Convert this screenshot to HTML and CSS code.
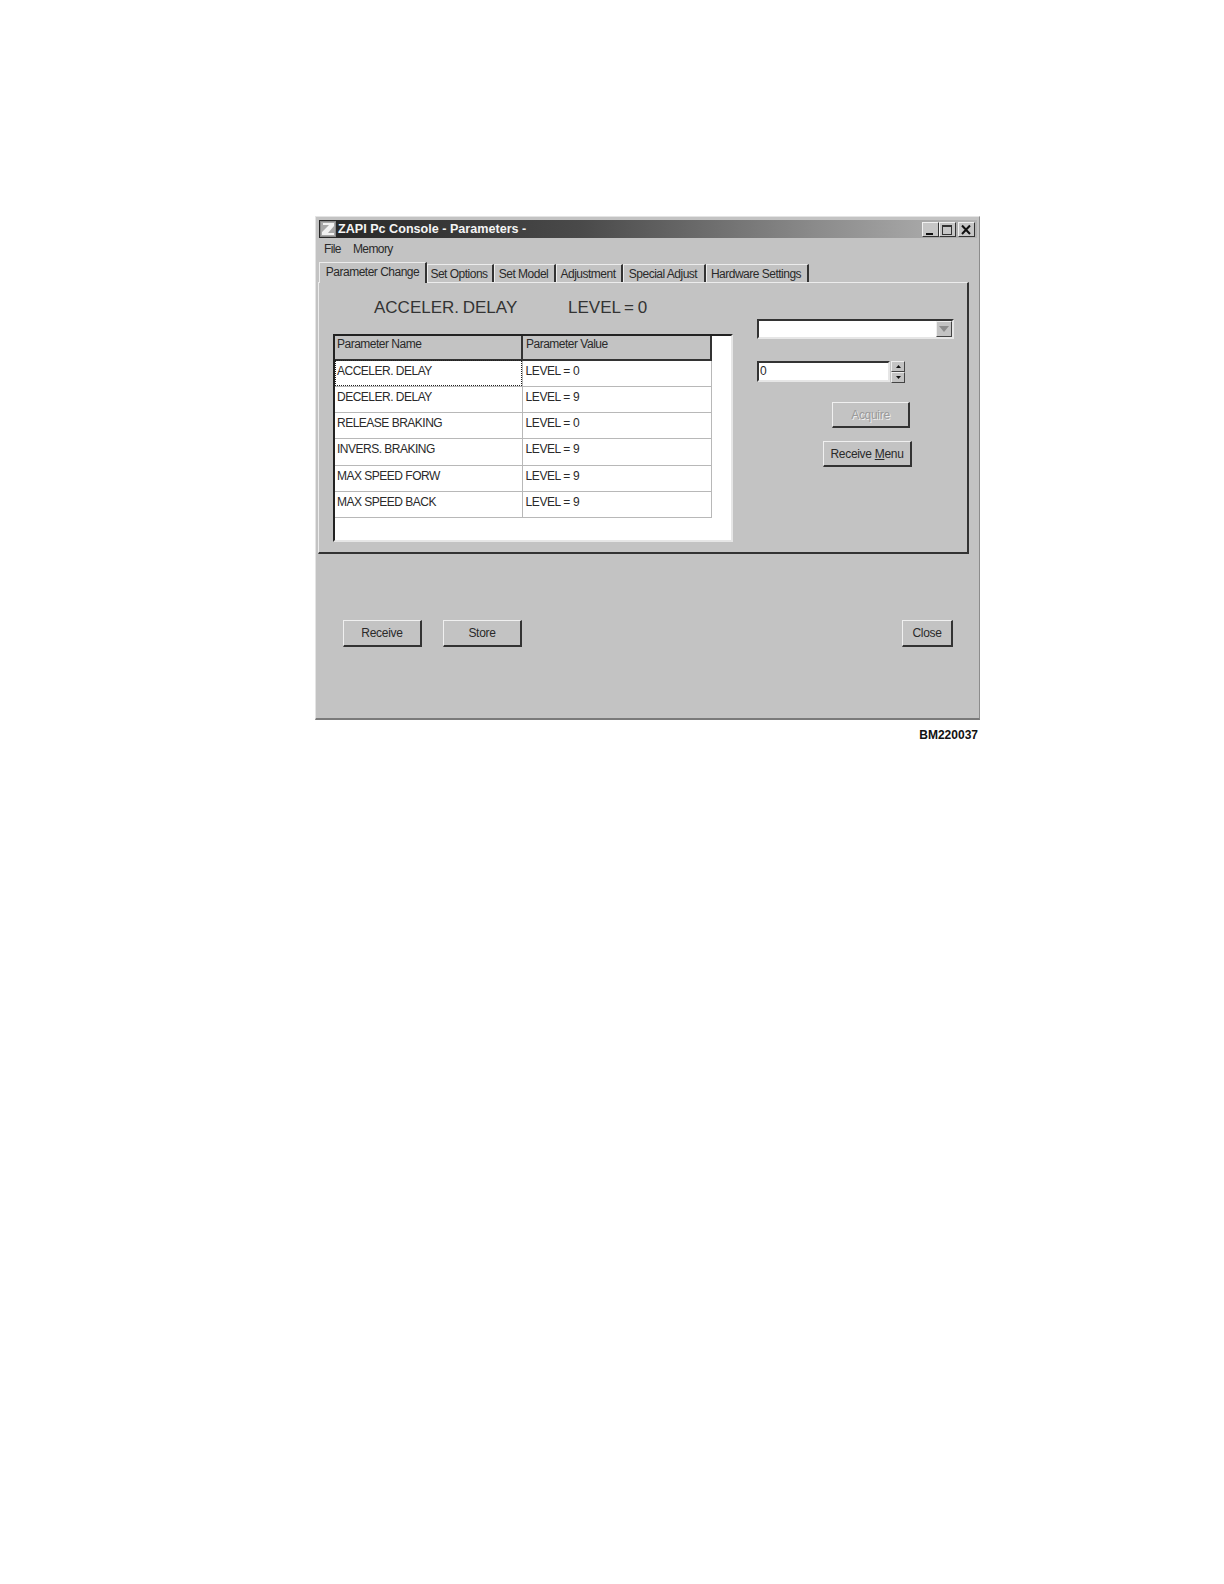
FILE: index.html
```html
<!DOCTYPE html>
<html lang="en">
<head>
    <meta charset="UTF-8">
    <title>ZAPI Pc Console - Parameters -</title>
    <link rel="stylesheet" href="styles.css">
</head>
<body>
    <div class="figure">
        <div class="window">
            <div class="titlebar">
                <svg class="app-icon" width="16" height="16" viewBox="0 0 16 16">
                    <rect width="16" height="16" fill="#8a8a8a"/>
                    <rect x="1" y="1" width="14" height="14" fill="#a8a8a8"/>
                    <polygon points="3,2 14,2 14,5 8,12 14,12 14,14 2,14 2,11 9,4 3,4" fill="#f2f2f2"/>
                </svg>
                <span class="title">ZAPI Pc Console - Parameters -</span>
                <div class="win-buttons">
                    <button class="win-btn">
                        <svg width="15" height="14" viewBox="0 0 15 14"><rect x="3" y="10" width="7" height="2" fill="#111"/></svg>
                    </button>
                    <button class="win-btn">
                        <svg width="15" height="14" viewBox="0 0 15 14"><rect x="2.5" y="2.5" width="9" height="9" fill="none" stroke="#333"/><rect x="2" y="2" width="10" height="2" fill="#333"/></svg>
                    </button>
                    <button class="win-btn close-btn">
                        <svg width="15" height="14" viewBox="0 0 15 14"><path d="M3 2.5 L11 11 M11 2.5 L3 11" stroke="#111" stroke-width="2" fill="none"/></svg>
                    </button>
                </div>
            </div>

            <div class="menubar">
                <span>File</span>
                <span>Memory</span>
            </div>

            <div class="tabs">
                <div class="tab active">Parameter Change</div>
                <div class="tab w-options">Set Options</div>
                <div class="tab w-model">Set Model</div>
                <div class="tab w-adjust">Adjustment</div>
                <div class="tab w-special">Special Adjust</div>
                <div class="tab w-hardware">Hardware Settings</div>
            </div>

            <div class="panel">
                <div class="left-col">
                    <div class="readout">
                        <span class="readout-name">ACCELER. DELAY</span>
                        <span>LEVEL = 0</span>
                    </div>
                    <div class="grid">
                        <table>
                            <thead>
                                <tr><th>Parameter Name</th><th>Parameter Value</th></tr>
                            </thead>
                            <tbody>
                                <tr><td class="focused">ACCELER. DELAY</td><td>LEVEL = 0</td></tr>
                                <tr><td>DECELER. DELAY</td><td>LEVEL = 9</td></tr>
                                <tr><td>RELEASE BRAKING</td><td>LEVEL = 0</td></tr>
                                <tr><td>INVERS. BRAKING</td><td>LEVEL = 9</td></tr>
                                <tr><td>MAX SPEED FORW</td><td>LEVEL = 9</td></tr>
                                <tr><td>MAX SPEED BACK</td><td>LEVEL = 9</td></tr>
                            </tbody>
                        </table>
                    </div>
                </div>

                <div class="right-col">
                    <div class="combo">
                        <div class="combo-arrow">
                            <svg width="10" height="8" viewBox="0 0 10 8"><polygon points="0,1 10,1 5,7" fill="#8c8c8c"/></svg>
                        </div>
                    </div>
                    <div class="spin-row">
                        <div class="spin-edit">0</div>
                        <div class="spin-buttons">
                            <div class="spin-btn"><svg width="5" height="3" viewBox="0 0 5 3"><polygon points="2.5,0 5,3 0,3" fill="#111"/></svg></div>
                            <div class="spin-btn"><svg width="5" height="3" viewBox="0 0 5 3"><polygon points="0,0 5,0 2.5,3" fill="#111"/></svg></div>
                        </div>
                    </div>
                    <button class="btn acquire" disabled>Acquire</button>
                    <button class="btn receive-menu">Receive <u>M</u>enu</button>
                </div>
            </div>

            <div class="footer">
                <button class="btn w-78">Receive</button>
                <button class="btn w-78 store">Store</button>
                <button class="btn close">Close</button>
            </div>
        </div>
        <div class="caption">BM220037</div>
    </div>
</body>
</html>
```

FILE: styles.css
```css
body {
    margin: 0;
    padding: 216px 0 0 315px;
    background-color: #fff;
    font-family: "Liberation Sans", Arial, sans-serif;
    font-size: 12px;
    letter-spacing: -0.5px;
    color: #2a2a2a;
}
.figure {
    width: 665px;
}
.window {
    box-sizing: border-box;
    width: 665px;
    height: 504px;
    padding: 3px 2px 0 3px;
    background-color: #c3c3c3;
    border-top: 1px solid #e4e4e4;
    border-left: 1px solid #e4e4e4;
    border-right: 1px solid #8c8c8c;
    border-bottom: 2px solid #7a7a7a;
}
.titlebar {
    display: flex;
    align-items: center;
    height: 18px;
    background: linear-gradient(to right, #262626 0%, #4a4a4a 40%, #8a8a8a 75%, #b4b4b4 100%);
    color: #f4f4f4;
}
.app-icon {
    margin-left: 1px;
    flex: none;
}
.title {
    margin-left: 2px;
    font-size: 12.6px;
    font-weight: bold;
    letter-spacing: 0;
}
.win-buttons {
    display: flex;
    margin-left: auto;
    margin-right: 2px;
}
.win-btn {
    box-sizing: border-box;
    width: 17px;
    height: 15px;
    padding: 0;
    display: flex;
    background-color: #c6c6c6;
    border: 1px solid;
    border-color: #f0f0f0 #333 #333 #f0f0f0;
}
.win-btn svg {
    display: block;
}
.close-btn {
    margin-left: 2px;
}
.menubar {
    display: flex;
    gap: 12px;
    height: 23px;
    padding-left: 5px;
    line-height: 22px;
    letter-spacing: -0.6px;
}
.tabs {
    display: flex;
    align-items: flex-end;
    height: 21px;
}
.tab {
    box-sizing: border-box;
    height: 18px;
    padding-right: 2px;
    text-align: center;
    line-height: 18px;
    white-space: nowrap;
    border-top: 1px solid #ececec;
    border-left: 1px solid #ececec;
    border-right: 2px solid #333;
}
.tab.active {
    position: relative;
    height: 21px;
    width: 108px;
    margin-bottom: -1px;
    padding-right: 0;
    line-height: 19px;
    background-color: #c3c3c3;
}
.w-options { width: 67px; }
.w-model { width: 62px; }
.w-adjust { width: 67px; }
.w-special { width: 83px; }
.w-hardware { width: 103px; }
.panel {
    box-sizing: border-box;
    display: flex;
    width: 651px;
    height: 272px;
    margin-left: -1px;
    padding-left: 14px;
    border-top: 1px solid #ececec;
    border-left: 1px solid #ececec;
    border-right: 2px solid #333;
    border-bottom: 2px solid #333;
}
.left-col {
    width: 400px;
    flex: none;
}
.readout {
    display: flex;
    height: 51px;
    padding-left: 41px;
    font-size: 17px;
    line-height: 49px;
    letter-spacing: 0;
    word-spacing: -1px;
    color: #333;
}
.readout-name {
    width: 194px;
}
.grid {
    box-sizing: border-box;
    height: 208px;
    background-color: #fff;
    border-top: 2px solid #222;
    border-left: 2px solid #222;
    border-right: 2px solid #e6e6e6;
    border-bottom: 2px solid #e6e6e6;
}
table {
    table-layout: fixed;
    width: 377px;
    border-collapse: collapse;
}
th, td {
    box-sizing: border-box;
    height: 26.25px;
    padding: 0 2px 5px 2px;
    font-size: 12px;
    font-weight: normal;
    text-align: left;
    white-space: nowrap;
    letter-spacing: -0.5px;
}
td:last-child {
    padding-left: 3px;
    letter-spacing: -0.4px;
}
th {
    height: 24px;
    padding-bottom: 7px;
    background-color: #c3c3c3;
    border-right: 2px solid #333;
    border-bottom: 2px solid #333;
}
th:last-child {
    padding-left: 3px;
}
th:first-child {
    width: 187px;
}
td {
    border-right: 1px solid #b8b8b8;
    border-bottom: 1px solid #b8b8b8;
}
td.focused {
    outline: 1px dotted #222;
    outline-offset: -1px;
}
.right-col {
    display: flex;
    flex-direction: column;
    align-items: flex-start;
    width: 197px;
    margin-left: 24px;
    padding-top: 36px;
}
.combo {
    box-sizing: border-box;
    display: flex;
    justify-content: flex-end;
    width: 197px;
    height: 20px;
    background-color: #fff;
    border-top: 2px solid #333;
    border-left: 2px solid #333;
    border-right: 2px solid #e6e6e6;
    border-bottom: 2px solid #e6e6e6;
}
.combo-arrow {
    box-sizing: border-box;
    display: flex;
    align-items: center;
    justify-content: center;
    width: 16px;
    height: 16px;
    background-color: #c3c3c3;
    border: 1px solid;
    border-color: #eee #444 #444 #eee;
}
.spin-row {
    display: flex;
    margin-top: 22px;
}
.spin-edit {
    box-sizing: border-box;
    width: 133px;
    height: 21px;
    padding-left: 1px;
    line-height: 17px;
    background-color: #fff;
    border-top: 2px solid #333;
    border-left: 2px solid #333;
    border-right: 2px solid #e6e6e6;
    border-bottom: 2px solid #e6e6e6;
}
.spin-buttons {
    display: flex;
    flex-direction: column;
    margin-left: 1px;
}
.spin-btn {
    box-sizing: border-box;
    display: flex;
    align-items: center;
    justify-content: center;
    width: 14px;
    height: 11px;
    background-color: #c3c3c3;
    border: 1px solid;
    border-color: #eee #444 #444 #eee;
}
.btn {
    box-sizing: border-box;
    height: 26px;
    padding: 0;
    font-family: "Liberation Sans", Arial, sans-serif;
    font-size: 12px;
    letter-spacing: -0.3px;
    color: #2a2a2a;
    background-color: #c3c3c3;
    border-top: 1px solid #f0f0f0;
    border-left: 1px solid #f0f0f0;
    border-right: 2px solid #333;
    border-bottom: 2px solid #333;
}
.acquire {
    width: 78px;
    margin-top: 19px;
    margin-left: 75px;
    color: #9a9a9a;
    text-shadow: 1px 1px 0 #eee;
}
.receive-menu {
    width: 89px;
    margin-top: 13px;
    margin-left: 66px;
}
.footer {
    display: flex;
    padding: 66px 24px 0 24px;
}
.footer .btn {
    height: 27px;
}
.w-78 {
    width: 79px;
}
.store {
    margin-left: 21px;
}
.close {
    width: 51px;
    margin-left: auto;
}
.caption {
    margin-top: 8px;
    padding-right: 2px;
    text-align: right;
    font-size: 12px;
    font-weight: bold;
    letter-spacing: 0;
    color: #111;
}
```
